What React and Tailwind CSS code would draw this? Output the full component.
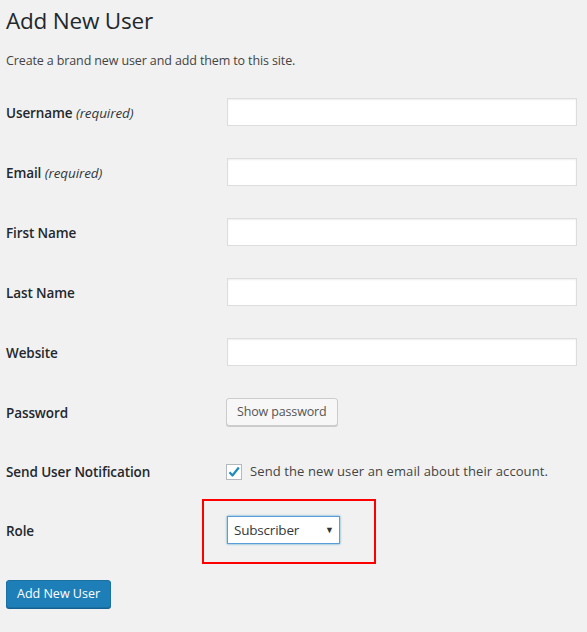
import React from "react";

const font = { fontFamily: '"Open Sans", "Noto Sans", sans-serif' };

function Label({ children, w = "w-[221px]" }) {
  return (
    <div className={`${w} pt-[2px] text-[13.5px] tracking-[-0.1px] font-semibold text-[#23282d]`}>{children}</div>
  );
}

function TextRow({ label, req }) {
  return (
    <div className="flex items-center h-[60px]">
      <Label>
        {label}
        {req && <span className="italic font-medium text-[#32373c]"> (required)</span>}
      </Label>
      <div className="w-[350px] h-[28px] bg-white border border-[#ddd] shadow-[inset_0_1px_2px_rgba(0,0,0,0.07)]" />
    </div>
  );
}

export default function App() {
  return (
    <div className="relative w-[587px] h-[632px] bg-[#f1f1f1] pl-[6px] text-[#23282d]" style={font}>
      <h1 className="pt-[6px] text-[22.5px] tracking-[-0.2px] leading-[29px] font-normal">Add New User</h1>
      <p className="mt-[16px] text-[12.5px] tracking-[-0.12px] leading-[19px] text-[#444]">Create a brand new user and add them to this site.</p>
      <div className="mt-[12px]">
        <TextRow label="Username" req />
        <TextRow label="Email" req />
        <TextRow label="First Name" />
        <TextRow label="Last Name" />
        <TextRow label="Website" />
        <div className="flex items-center h-[60px]">
          <Label w="w-[220px]">Password</Label>
          <button className="h-[28px] px-[10px] rounded-[3px] bg-[#f7f7f7] border border-[#ccc] shadow-[0_1px_0_#ccc] text-[12.5px] tracking-[-0.15px] text-[#555]">Show password</button>
        </div>
        <div className="flex items-center h-[59px]">
          <Label w="w-[220px]">Send User Notification</Label>
          <div className="flex items-center">
            <div className="w-[16px] h-[16px] bg-white border border-[#b4b9be] flex items-center justify-center">
              <svg width="14" height="14" viewBox="0 0 14 14">
                <path d="M2.5 7.2 L5.5 10.5 L11.8 2.5" fill="none" stroke="#1e8cbe" strokeWidth="2.2" strokeLinejoin="round" />
              </svg>
            </div>
            <span className="ml-[8px] text-[13px] tracking-[0.1px] text-[#444]">Send the new user an email about their account.</span>
          </div>
        </div>
        <div className="flex items-center h-[58px]">
          <Label>Role</Label>
          <div className="w-[113px] h-[28px] bg-white border border-[#5b9dd9] shadow-[0_0_2px_rgba(30,140,190,0.8)] flex items-center justify-between pl-[6px] pr-[5px]">
            <span className="text-[13.5px] tracking-[-0.2px] text-[#32373c]">Subscriber</span>
            <span className="text-[9px] text-[#333]">▼</span>
          </div>
        </div>
      </div>
      <button className="mt-[21px] h-[28px] px-[10px] rounded-[3px] bg-[#1e7fb8] border border-[#1a6fa3] shadow-[0_1px_0_#136094] text-white text-[12.5px]">Add New User</button>
      <div className="absolute left-[202px] top-[499px] w-[174px] h-[65px] border-2 border-[#ff0000]" />
    </div>
  );
}
